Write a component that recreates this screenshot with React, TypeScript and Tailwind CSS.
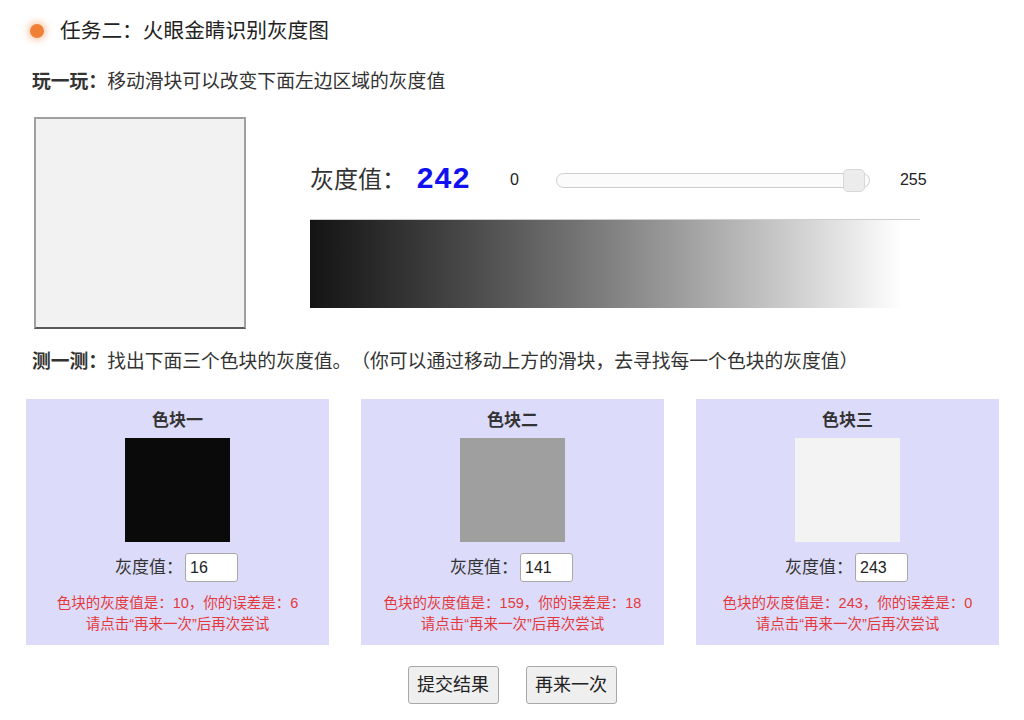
import React from 'react';

const cjk = '"Liberation Sans", "Noto Sans CJK SC", sans-serif';

interface Block {
  title: string;
  gray: string;
  guess: number;
  actual: number;
}

const blocks: Block[] = [
  { title: '色块一', gray: '#0a0a0a', guess: 16, actual: 10 },
  { title: '色块二', gray: '#9f9f9f', guess: 141, actual: 159 },
  { title: '色块三', gray: '#f3f3f3', guess: 243, actual: 243 },
];

const GrayCard: React.FC<{ block: Block }> = ({ block }) => (
  <div className="w-[303px] h-[246px] bg-[#dcdcfa] flex flex-col items-center pt-[10px]">
    <div className="text-[17px] leading-[24px] font-bold text-[#333]">{block.title}</div>
    <div className="mt-[5px] w-[105px] h-[104px]" style={{ backgroundColor: block.gray }} />
    <div className="mt-[11px] flex items-center gap-[2px] pr-[2px]">
      <span className="text-[17px] text-[#333]">灰度值：</span>
      <div className="w-[53px] h-[29px] bg-white border border-[#a8a8a8] rounded-[3px] flex items-center pl-[4px] text-[16px] text-[#222]">
        {block.guess}
      </div>
    </div>
    <div className="mt-[11px] text-[14.5px] leading-[21px] text-[#e4393c] text-center">
      <div>色块的灰度值是：{block.actual}，你的误差是：{Math.abs(block.guess - block.actual)}</div>
      <div>请点击“再来一次”后再次尝试</div>
    </div>
  </div>
);

export default function App() {
  return (
    <div
      className="w-[1024px] h-[720px] bg-white text-[#333] overflow-hidden [text-spacing-trim:space-all]"
      style={{ fontFamily: cjk }}
    >
      <div className="flex items-center pl-[30px] pt-[20px] h-[42px]">
        <div className="w-[14px] h-[14px] rounded-full bg-[#f08035] shadow-[0_0_6px_3px_rgba(240,128,53,0.35)]" />
        <div className="ml-[16px] text-[20.7px] text-[#222]">任务二：火眼金睛识别灰度图</div>
      </div>

      <div className="pl-[32px] mt-[27px] text-[18.8px] leading-[26px]">
        <span className="font-bold">玩一玩：</span>移动滑块可以改变下面左边区域的灰度值
      </div>

      <div className="flex mt-[22px] pl-[34px]">
        <div className="w-[212px] h-[212px] bg-[#f2f2f2] border-2 border-[#a0a0a0] border-b-[#5a5a5a]" />
        <div className="ml-[64px] flex flex-col">
          <div className="flex items-center h-[40px] mt-[43px]">
            <span className="text-[24px] text-[#333]">灰度值：</span>
            <span
              className="ml-[10px] text-[30px] font-bold text-[#1010f0] leading-none"
              style={{ fontFamily: '"Liberation Mono", monospace' }}
            >
              242
            </span>
            <span className="ml-[40px] text-[16px] text-[#222]">0</span>
            <div className="relative ml-[37px] w-[314px] h-[15px] rounded-full border border-[#cfcfcf] bg-[#fbfbfb]">
              <div className="absolute left-[286px] top-[-5px] w-[22px] h-[23px] rounded-[5px] border border-[#d8d8d8] bg-[#ececec]" />
            </div>
            <span className="ml-[30px] text-[16px] text-[#222]">255</span>
          </div>
          <div className="mt-[19px] w-[610px] h-[89px] bg-gradient-to-r from-[#141414] to-[#ffffff] to-[97%] border-t border-[#cccccc]" />
        </div>
      </div>

      <div className="pl-[32px] mt-[20px] text-[18.8px] leading-[26px]">
        <span className="font-bold">测一测：</span>找出下面三个色块的灰度值。（你可以通过移动上方的滑块，去寻找每一个色块的灰度值）
      </div>

      <div className="flex gap-[32px] pl-[26px] mt-[24px]">
        {blocks.map((b) => (
          <GrayCard key={b.title} block={b} />
        ))}
      </div>

      <div className="flex justify-center gap-[27px] mt-[21px]">
        <button className="w-[91px] h-[38px] bg-[#efefef] border border-[#a9a9a9] rounded-[3px] text-[18px] text-[#222]">
          提交结果
        </button>
        <button className="w-[91px] h-[38px] bg-[#efefef] border border-[#a9a9a9] rounded-[3px] text-[18px] text-[#222]">
          再来一次
        </button>
      </div>
    </div>
  );
}
